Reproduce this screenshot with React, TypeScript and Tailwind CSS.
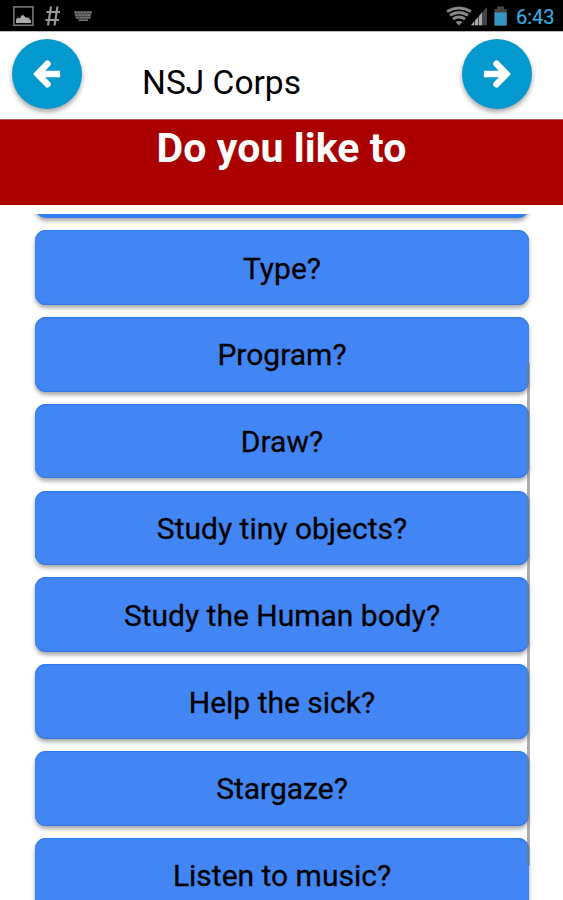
import React from "react";

const questions = [
  { label: "Type?" },
  { label: "Program?" },
  { label: "Draw?" },
  { label: "Study tiny objects?" },
  { label: "Study the Human body?" },
  { label: "Help the sick?" },
  { label: "Stargaze?" },
  { label: "Listen to music?" },
];

function StatusBar() {
  return (
    <div className="flex h-[31px] shrink-0 items-center bg-black pl-[13px] pr-[8px]">
      <svg width="84" height="31" viewBox="0 0 84 31" fill="none">
        <rect x="0.9" y="6.9" width="19" height="18.4" stroke="#777" strokeWidth="1.6" />
        <path d="M3 23V19.500L5 17.500L7 18.500L8.500 15.500L10.500 15L12.500 17.500L15 17.500L18 20.500V23Z" fill="#aaa" />
        <path d="M38 6.500L35 25.500M44.500 6.500L41.500 25.500M33.500 12H47M32.500 20H46" stroke="#999" strokeWidth="2.100" />
        <path d="M61 11H79L77.500 18.500H62.500Z" fill="#444" />
        <path d="M61.500 12.400H79M62.500 15.200H78M63.500 17.800H77" stroke="#777" strokeWidth="1.800" strokeDasharray="2.2 0.8" />
        <path d="M65.500 20.200H75" stroke="#777" strokeWidth="1.600" />
      </svg>
      <div className="flex-1" />
      <svg width="64" height="31" viewBox="446 0 64 31" fill="none">
        <g stroke="#888" strokeWidth="3">
          <path d="M448 11.500Q460 4.500 472 11.500" />
          <path d="M451 15.300Q460 9.500 469 15.300" />
          <path d="M454 19Q460 15 466 19" />
        </g>
        <path d="M456.500 22Q460 19.800 463.500 22L460 25.400Z" fill="#888" />
        <path d="M472 25.300L488 7V25.300Z" fill="#444" />
        <path d="M472 25.300L475 21.800V25.300ZM476 25.300V20.500L479 17V25.300ZM480 25.300V16L483 12.500V25.300Z" fill="#aaa" />
        <path d="M495.500 9H498V6.500H505V9H507.700V25.500H495.500Z" fill="#444" />
        <path d="M495.500 12.500H507.700V25.500H495.500Z" fill="#3395c2" />
      </svg>
      <span className="ml-[7px] mt-[3px] w-[39px] whitespace-nowrap text-[20px] leading-[28px] text-[#36aee0] [-webkit-text-stroke:0.2px_#36aee0]">6:43</span>
    </div>
  );
}

function RoundButton({ direction }: { direction: "left" | "right" }) {
  return (
    <button
      aria-label={direction === "left" ? "Back" : "Next"}
      className="flex size-[70px] shrink-0 items-center justify-center rounded-full bg-[#0499ce] shadow-[0_3px_5px_rgba(0,0,0,0.36)]"
    >
      <svg width="28" height="30" viewBox="0 0 28 30" fill="none" className={direction === "right" ? "-scale-x-100" : ""}>
        <path d="M14.500 4.800L4.600 15L14.500 25.200" stroke="white" strokeWidth="6.500" strokeLinecap="round" />
        <path d="M5 15H26" stroke="white" strokeWidth="6.500" />
        <path d="M25 11.750h1.200q1 0 1 1v4.500q0 1-1 1H25Z" fill="white" />
      </svg>
    </button>
  );
}

export default function App() {
  return (
    <div className="flex h-[900px] w-[563px] flex-col overflow-hidden bg-white font-['Roboto',sans-serif] text-black">
      <StatusBar />
      <header className="flex h-[88px] shrink-0 items-start border-t border-[#bbb] pt-[7px] pr-[31px] pl-[12px]">
        <RoundButton direction="left" />
        <h1 className="mt-[23px] ml-[60px] flex-1 whitespace-nowrap text-[33.500px] leading-[42px]">NSJ Corps</h1>
        <RoundButton direction="right" />
      </header>
      <div className="h-[86px] shrink-0 border-t border-[#b95555] bg-[#aa0000] pt-[6px] text-center">
        <h2 className="text-[41px] font-bold leading-[44px] tracking-[0.1px] text-white">Do you like to</h2>
      </div>
      <main className="relative mt-[8.500px] min-h-0 flex-1 overflow-hidden px-[35px]">
        <div className="flex w-[494px] flex-col gap-[12.300px]">
          <div className="-mt-[70px] h-[74.500px] shrink-0 rounded-[11px] bg-[#2f7df2] shadow-[0_3px_4px_rgba(0,0,0,0.34)]" />
          {questions.map((q) => (
            <button
              key={q.label}
              className="flex h-[74.500px] shrink-0 items-center justify-center rounded-[11px] bg-[#4285f4] pt-[2px] text-[30px] leading-[36px] shadow-[0_3px_4px_rgba(0,0,0,0.34),inset_0_1px_1px_#2b78e8,inset_0_-1px_1px_#3277df] [-webkit-text-stroke:0.3px_black]"
            >
              {q.label}
            </button>
          ))}
        </div>
        <div className="absolute top-[149px] left-[527px] h-[503px] w-[3px] bg-[#777]/60" />
      </main>
    </div>
  );
}
